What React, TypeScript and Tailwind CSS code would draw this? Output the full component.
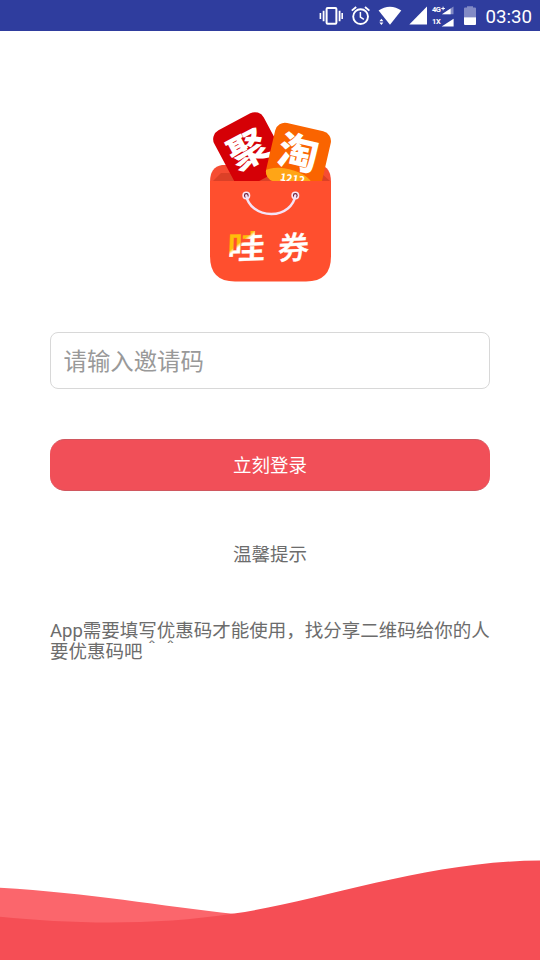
import React, { useState } from 'react';

const StatusBar: React.FC = () => {
  return (
    <header className="flex h-[31px] items-center bg-[#2f3d9e] pr-2 pl-[318px] text-white">
      {/* Vibrate */}
      <svg className="h-[31px] w-[25px]" viewBox="318 0 25 31" fill="none" stroke="#fff">
        <rect x="326.6" y="8" width="9.8" height="15.8" rx="1" strokeWidth="2" />
        <path d="M323.6 10.8v10.4M339.6 10.8v10.4" strokeWidth="1.8" />
        <path d="M320.4 13v6M342.2 13v6" strokeWidth="1.6" />
      </svg>
      {/* Alarm */}
      <svg className="ml-2 h-[31px] w-5" viewBox="351 0 20 31" fill="none" stroke="#fff">
        <circle cx="360.6" cy="16.6" r="7.4" strokeWidth="1.9" />
        <path d="M351.8 10.6l4.4-3.7M369.4 10.6l-4.4-3.7" strokeWidth="1.9" />
        <path d="M360.4 12v5.2l3.5 2.1" strokeWidth="1.5" />
      </svg>
      {/* Wi-Fi */}
      <svg className="ml-[7px] h-[31px] w-6" viewBox="378 0 24 31" fill="#fff">
        <path d="M378.6 10.6c6.8-5.1 15.9-5.1 22.7 0L390 24.8z" />
        <path d="M379.4 21.3l2-2.5 2 2.5zM379.4 22.6h4l-2 2.5z" />
      </svg>
      {/* Signal */}
      <svg className="ml-[7px] h-[31px] w-[18px]" viewBox="409 0 18 31" fill="#fff">
        <path d="M409.3 24.4L427 6.6v17.8z" />
      </svg>
      {/* Second SIM */}
      <div className="ml-[5px] w-[22px] pt-px font-['Roboto',sans-serif] text-[7.5px] leading-none font-bold">
        <div className="flex h-[9px] items-center">
          <span className="w-[9px] tracking-[-0.6px]">4G</span>
          <svg className="h-[9px] w-[13px]" viewBox="0 0 13 9" fill="#fff">
            <path d="M0.3 2.5h3.6M2.1 0.7v3.6" stroke="#fff" strokeWidth="1" />
            <path d="M1 8.2l11.5-7.6v7.6z" opacity="0.4" />
            <path d="M1 8.2l8.6-5.7v5.7z" />
          </svg>
        </div>
        <div className="mt-[3px] flex h-[9px] items-center">
          <span className="w-[9px] tracking-[-0.2px]">1X</span>
          <svg className="h-[9px] w-[13px]" viewBox="0 0 13 9" fill="#fff">
            <path d="M0.6 8.4L12.6 0.8v7.6z" />
          </svg>
        </div>
      </div>
      {/* Battery */}
      <svg className="ml-2.5 h-[31px] w-3" viewBox="464 0 12 31" fill="#fff">
        <path d="M464 17.2V8.6q0-1 1-1h2V6.2h6v1.4h2q1 0 1 1v8.6z" opacity="0.4" />
        <path d="M464 17.2h12V24q0 1-1 1h-10q-1 0-1-1z" />
      </svg>
      <span className="ml-[9.5px] pt-[3px] font-['Roboto',sans-serif] text-[18.7px] leading-none whitespace-nowrap">
        03:30
      </span>
    </header>
  );
};

const Logo: React.FC = () => {
  return (
    <svg
      className="mx-auto h-[172px] w-[122px]"
      viewBox="209 111 122 172"
      fontFamily="'Noto Sans CJK SC', sans-serif"
      textAnchor="middle"
    >
      {/* Back of the bag */}
      <path d="M210 190v-8q0-15 12-17h98q11 2 11 17v8z" fill="#f64d33" />
      <path d="M213 181l8-8h100l9 8z" fill="#dc4027" />

      {/* Red card */}
      <g transform="translate(247.5 146.5) rotate(-28)">
        <rect x="-28" y="-28" width="56" height="64" rx="10" fill="#d50006" />
        <text x="-1" y="17.5" fontSize="39" fontWeight="900" fill="#fff">聚</text>
      </g>

      {/* Orange card */}
      <g transform="translate(299 154) rotate(13)">
        <clipPath id="card">
          <rect x="-28.5" y="-27.5" width="57" height="60" rx="10" />
        </clipPath>
        <rect x="-28.5" y="-27.5" width="57" height="60" rx="10" fill="#fa6400" />
        <ellipse cx="-6" cy="30" rx="27" ry="13" fill="#ffa516" clipPath="url(#card)" />
        <text x="-1" y="13.5" fontSize="40" fontWeight="900" fill="#fff">淘</text>
        <text x="-3" y="29" fontSize="10.5" fontWeight="700" fill="#fff" transform="rotate(-5)">1212</text>
      </g>

      {/* Front of the bag */}
      <path d="M210 181h121v75.5q0 25-25 25h-71q-25 0-25-25z" fill="#ff4f2e" />
      <circle cx="246.3" cy="195.5" r="3.2" fill="#6b1f3c" stroke="#f8e6f4" strokeWidth="1.6" />
      <circle cx="295.3" cy="195.5" r="3.2" fill="#6b1f3c" stroke="#f8e6f4" strokeWidth="1.6" />
      <path
        d="M246.3 195.5c1.5 10 11.5 18.5 25 18.5s22.5-8.5 24-18.5"
        fill="none"
        stroke="#f4e3f6"
        strokeWidth="2.4"
        strokeLinecap="round"
      />

      <linearGradient id="wa" x1="0" y1="0" x2="0.65" y2="1">
        <stop offset="0.46" stopColor="#ffbe0a" />
        <stop offset="0.52" stopColor="#fff" />
      </linearGradient>
      <text
        transform="translate(246 259) rotate(-2) skewX(-4) scale(1.16 1)"
        fontSize="33"
        fontWeight="500"
        stroke="url(#wa)"
        strokeWidth="0.4"
        fill="url(#wa)"
      >
        哇
      </text>
      <text
        transform="translate(293 259) rotate(-3) skewX(-6)"
        fontSize="31"
        fontWeight="500"
        stroke="#fff"
        strokeWidth="0.4"
        fill="#fff"
      >
        券
      </text>
    </svg>
  );
};

const Waves: React.FC = () => {
  return (
    <svg className="mt-auto block h-[100px] w-full" viewBox="0 860 540 100">
      <path d="M0 887.8C90 893 160 906 235 914v46H0z" fill="#fb666c" />
      <path
        d="M0 916.8C70 924 155 926 234 913.6C320 901 430 860.6 540 860.6V960H0z"
        fill="#f54e55"
      />
    </svg>
  );
};

const App: React.FC = () => {
  const [code, setCode] = useState('');

  return (
    <div className="flex h-[960px] w-[540px] flex-col overflow-hidden bg-white font-['Roboto','Noto_Sans_CJK_SC',sans-serif]">
      <StatusBar />

      <main className="flex flex-col px-[50px] pt-20">
        <Logo />

        <input
          className="mt-[49px] h-[57px] rounded-lg border border-[#d8d8d8] bg-white pt-0.5 pr-3 pl-[12.5px] text-[23.4px] text-gray-700 outline-none placeholder:text-[#999]"
          placeholder="请输入邀请码"
          value={code}
          onChange={(e) => setCode(e.target.value)}
        />

        <button className="mt-[50px] h-[52px] rounded-[15px] border-y border-[#d0575f] bg-[#f14f58] pt-[3px] text-[18.5px] text-white">
          立刻登录
        </button>

        <h2 className="mt-[53px] text-center text-[18.5px] leading-[22px] text-[#6c6c6c]">温馨提示</h2>

        <p className="mt-[55px] text-[18.5px] leading-[21px] whitespace-nowrap text-[#6c6c6c]">
          App需要填写优惠码才能使用，找分享二维码给你的人
          <br />
          要优惠码吧＾＾
        </p>
      </main>

      <Waves />
    </div>
  );
};

export default App;
